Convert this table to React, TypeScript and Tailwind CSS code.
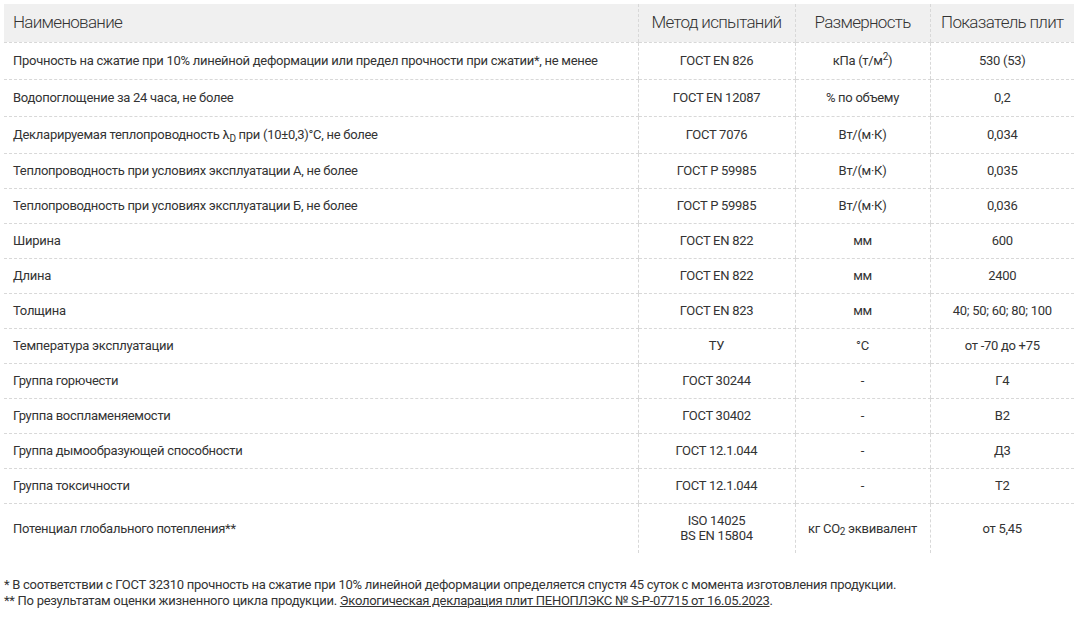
import React from "react";

type Row = { name: React.ReactNode; method: React.ReactNode; unit: React.ReactNode; value: React.ReactNode; h?: string };

const rows: Row[] = [
  { name: "Прочность на сжатие при 10% линейной деформации или предел прочности при сжатии*, не менее", method: "ГОСТ EN 826", unit: <>кПа (т/м<sup className="text-[10px]">2</sup>)</>, value: "530 (53)", h: "h-[37px]" },
  { name: "Водопоглощение за 24 часа, не более", method: "ГОСТ EN 12087", unit: "% по объему", value: "0,2", h: "h-[37px]" },
  { name: <>Декларируемая теплопроводность λ<sub className="text-[10px]">D</sub> при (10±0,3)°С, не более</>, method: "ГОСТ 7076", unit: "Вт/(м·К)", value: "0,034", h: "h-[37px]" },
  { name: "Теплопроводность при условиях эксплуатации А, не более", method: "ГОСТ Р 59985", unit: "Вт/(м·К)", value: "0,035" },
  { name: "Теплопроводность при условиях эксплуатации Б, не более", method: "ГОСТ Р 59985", unit: "Вт/(м·К)", value: "0,036" },
  { name: "Ширина", method: "ГОСТ EN 822", unit: "мм", value: "600" },
  { name: "Длина", method: "ГОСТ EN 822", unit: "мм", value: "2400" },
  { name: "Толщина", method: "ГОСТ EN 823", unit: "мм", value: "40; 50; 60; 80; 100" },
  { name: "Температура эксплуатации", method: "ТУ", unit: "°С", value: "от -70 до +75" },
  { name: "Группа горючести", method: "ГОСТ 30244", unit: "-", value: "Г4" },
  { name: "Группа воспламеняемости", method: "ГОСТ 30402", unit: "-", value: "В2" },
  { name: "Группа дымообразующей способности", method: "ГОСТ 12.1.044", unit: "-", value: "Д3" },
  { name: "Группа токсичности", method: "ГОСТ 12.1.044", unit: "-", value: "Т2" },
  {
    name: "Потенциал глобального потепления**",
    method: <>ISO 14025<br />BS EN 15804</>,
    unit: <>кг CO<sub className="text-[10px]">2</sub> эквивалент</>,
    value: "от 5,45",
    h: "h-[50px]",
  },
];

export default function App() {
  return (
    <div className="bg-white pl-[4px] pt-[4px] text-[#333]" style={{ fontFamily: "Roboto, 'Liberation Sans', sans-serif" }}>
      <table className="w-[1070px] border-collapse table-fixed text-[13px] leading-[15px] tracking-[-0.28px]">
        <colgroup>
          <col className="w-[634px]" />
          <col className="w-[157px]" />
          <col className="w-[135px]" />
          <col className="w-[144px]" />
        </colgroup>
        <thead>
          <tr className="bg-[#f0f0f0] h-[38px] text-[17px] tracking-[-0.7px]">
            <th className="font-light text-left pl-[9px] border-b border-dashed border-[#d8d8d8]">Наименование</th>
            <th className="font-light text-center border-b border-l border-dashed border-[#d8d8d8]">Метод испытаний</th>
            <th className="font-light text-center border-b border-l border-dashed border-[#d8d8d8]">Размерность</th>
            <th className="font-light text-center border-b border-l border-dashed border-[#d8d8d8]">Показатель плит</th>
          </tr>
        </thead>
        <tbody>
          {rows.map((r, i) => {
            const last = i === rows.length - 1;
            const b = last ? "" : "border-b";
            return (
              <tr key={i} className={r.h ?? "h-[35px]"}>
                <td className={`pl-[9px] text-left border-dashed border-[#d8d8d8] ${b}`}>{r.name}</td>
                <td className={`text-center border-l border-dashed border-[#d8d8d8] ${b}`}>{r.method}</td>
                <td className={`text-center border-l border-dashed border-[#d8d8d8] ${b}`}>{r.unit}</td>
                <td className={`text-center border-l border-dashed border-[#d8d8d8] ${b}`}>{r.value}</td>
              </tr>
            );
          })}
        </tbody>
      </table>
      <div className="mt-[24px] text-[13px] leading-[16px] tracking-[-0.28px]">
        <p>* В соответствии с ГОСТ 32310 прочность на сжатие при 10% линейной деформации определяется спустя 45 суток с момента изготовления продукции.</p>
        <p>
          ** По результатам оценки жизненного цикла продукции.{" "}
          <a className="underline">Экологическая декларация плит ПЕНОПЛЭКС № S-P-07715 от 16.05.2023</a>.
        </p>
      </div>
    </div>
  );
}
